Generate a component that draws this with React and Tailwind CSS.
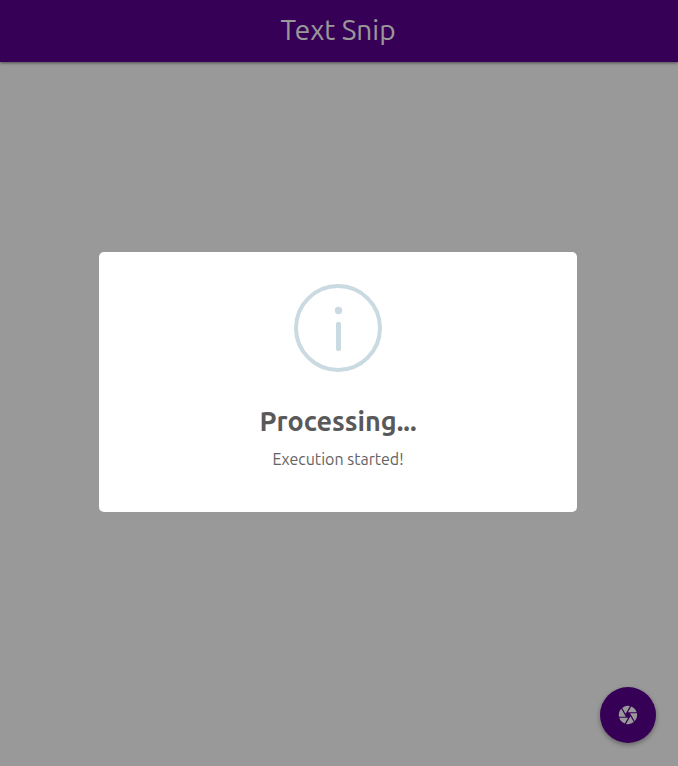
import { MdCamera } from "react-icons/md";

function InfoIcon() {
  return (
    <svg viewBox="0 0 88 88" className="h-[88px] w-[88px] text-[#c9dae1]" fill="none" aria-hidden="true">
      <circle cx="44" cy="44" r="42" stroke="currentColor" strokeWidth="4" />
      <circle cx="44.5" cy="26.5" r="3.7" fill="currentColor" />
      <rect x="42" y="38" width="5" height="29" rx="2" fill="currentColor" />
    </svg>
  );
}

export default function App() {
  return (
    <div className="flex min-h-screen flex-col bg-white font-['Ubuntu','Noto_Sans',sans-serif]">
      <header className="flex h-[62px] items-center justify-center bg-[#5c0091] pr-0.5 pb-0.5 text-white shadow-[0_1px_3px_rgba(0,0,0,0.5)]">
        <h1 className="text-[28px] leading-8">Text Snip</h1>
      </header>
      <main className="flex-1" />
      <button
        type="button"
        aria-label="Capture"
        className="fixed right-[22px] bottom-[23px] flex h-14 w-14 items-center justify-center rounded-full bg-[#5c0091] text-white shadow-[0_2px_5px_rgba(0,0,0,0.35)]"
      >
        <MdCamera className="h-[22px] w-[22px]" />
      </button>
      <div className="fixed inset-0 flex items-center justify-center bg-black/40 pr-0.5 pb-0.5">
        <div
          role="dialog"
          aria-modal="true"
          aria-labelledby="dialog-title"
          aria-describedby="dialog-text"
          className="flex w-[478px] max-w-full flex-col items-center rounded-[5px] bg-white px-5 pt-8 pb-10 text-center"
        >
          <InfoIcon />
          <h2 id="dialog-title" className="mt-8 text-[27px] leading-[34px] font-bold text-[#595959]">
            Processing...
          </h2>
          <p id="dialog-text" className="mt-2 text-base leading-[26px] text-[#646464]">
            Execution started!
          </p>
        </div>
      </div>
    </div>
  );
}
